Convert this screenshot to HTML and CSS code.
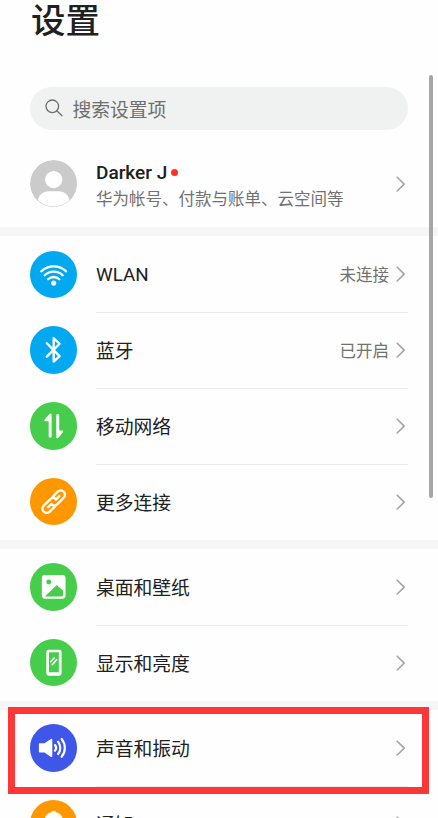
FILE: index.html
```html
<!DOCTYPE html>
<html lang="zh-CN">
<head>
<meta charset="utf-8">
<title>设置</title>
<link rel="stylesheet" href="styles.css">
</head>
<body>
<svg class="defs" width="0" height="0">
  <symbol id="chevron" viewBox="0 0 10 16"><path d="M1.200 1.200 8.200 8.100l-7 6.900" fill="none" stroke="#a4a4a4" stroke-width="1.600" stroke-linecap="round" stroke-linejoin="round"/></symbol>
</svg>
<main class="screen">
  <header class="header"><h1>设置</h1></header>
  <div class="search">
    <svg class="search-icon" viewBox="0 0 18 18"><circle cx="7.300" cy="7.300" r="6.300"/><path d="M12 12l5 4.800"/></svg>
    <span>搜索设置项</span>
  </div>
  <section class="profile">
    <svg class="icon" viewBox="0 0 48 48"><defs><clipPath id="face"><circle cx="24" cy="24" r="23"/></clipPath></defs><circle cx="24" cy="24" r="24" fill="#cbcbcb"/><g fill="#fff" clip-path="url(#face)"><circle cx="24" cy="19.800" r="8.700"/><path d="M7.500 43C8.500 35.500 13 31.700 19 31.700h10c6 0 10.500 3.800 11.500 11.300C35 49 13 49 7.500 43z"/></g></svg>
    <div class="who">
      <div class="name">Darker J<i class="dot"></i></div>
      <div class="sub">华为帐号、付款与账单、云空间等</div>
    </div>
    <svg class="chevron"><use href="#chevron"/></svg>
  </section>

  <div class="band"></div>
  <section class="group">
    <div class="row">
      <svg class="icon blue" viewBox="0 0 48 48"><g class="line" stroke-width="2.300"><path d="M11.400 20.600a18.500 18.500 0 0 1 25.200 0M14.900 24.600a13.200 13.200 0 0 1 18.200 0M18.300 28.600a8.300 8.300 0 0 1 11.400 0"/></g><circle cx="24" cy="32.500" r="2.600" fill="#fff"/></svg>
      <div class="body"><span class="label latin">WLAN</span><span class="value">未连接</span><svg class="chevron"><use href="#chevron"/></svg></div>
    </div>
    <div class="row">
      <svg class="icon blue" viewBox="0 0 48 48"><path class="line" stroke-width="2.400" d="M17 17.500 30 30.500l-6 5.500V12.400l6 5.600-13 13"/></svg>
      <div class="body"><span class="label">蓝牙</span><span class="value">已开启</span><svg class="chevron"><use href="#chevron"/></svg></div>
    </div>
    <div class="row">
      <svg class="icon green" viewBox="0 0 48 48"><path fill="#fff" d="M21.900 12.800v21.900a1.500 1.500 0 0 1-3 0V19.500h-3.600c-.9 0-1.100-.8-.6-1.400l4.700-5.700c.9-1 2.500-.8 2.500.4zM26.600 35.600V13.700a1.500 1.500 0 0 1 3 0v15.200h3.200c.9 0 1.100.8.600 1.400L29.100 36c-.9 1-2.500.8-2.500-.4z"/></svg>
      <div class="body"><span class="label">移动网络</span><svg class="chevron"><use href="#chevron"/></svg></div>
    </div>
    <div class="row">
      <svg class="icon orange" viewBox="0 0 48 48"><g class="line" stroke-width="2.400" transform="rotate(-45 24 24)"><path d="M21 28.300H14a4.300 4.300 0 0 1 0-8.600h9.500a4.300 4.300 0 0 1 4 3.300M27 19.700h7a4.300 4.300 0 0 1 0 8.600h-9.500a4.300 4.300 0 0 1-4-3.300M16 24h5M27 24h5"/></g></svg>
      <div class="body"><span class="label">更多连接</span><svg class="chevron"><use href="#chevron"/></svg></div>
    </div>
  </section>

  <div class="band"></div>
  <section class="group">
    <div class="row">
      <svg class="icon green" viewBox="0 0 48 48"><rect x="12" y="12.200" width="24" height="24" rx="3.200" fill="#fff"/><g fill="#46cd4b"><circle cx="19" cy="19.300" r="2.500"/><path d="M15 33.900 26.400 23c.5-.5 1-.5 1.500 0l5.600 5.200v4.200a1.500 1.500 0 0 1-1.500 1.500z"/></g></svg>
      <div class="body"><span class="label">桌面和壁纸</span><svg class="chevron"><use href="#chevron"/></svg></div>
    </div>
    <div class="row">
      <svg class="icon green" viewBox="0 0 48 48"><path fill="#fff" fill-rule="evenodd" d="M19 10.800h10.500a2.500 2.500 0 0 1 2.500 2.500v21.500a2.500 2.500 0 0 1-2.500 2.500H19a2.500 2.500 0 0 1-2.500-2.500V13.300a2.500 2.500 0 0 1 2.500-2.500zM19.200 13.400v20.300h10V13.400z"/><path class="line" stroke-width="1.600" d="m21 23 3.500-3.800M22.500 26l4.700-5.200"/></svg>
      <div class="body"><span class="label">显示和亮度</span><svg class="chevron"><use href="#chevron"/></svg></div>
    </div>
  </section>

  <div class="band"></div>
  <section class="group">
    <div class="row">
      <svg class="icon indigo" viewBox="0 0 48 48"><path fill="#fff" d="M9.800 19.600h4.900l6.400-4.500c.8-.5 1.500-.2 1.500.8v16.600c0 1-.7 1.300-1.500.8l-6.400-4.500H9.800a.8.800 0 0 1-.8-.8v-7.600c0-.5.300-.8.800-.8z"/><path class="line" stroke-width="2.200" d="M25.300 21.300a4.500 4.500 0 0 1 0 5.800M28.400 18a9.600 9.600 0 0 1 0 12.400M32 15.200a14 14 0 0 1 0 18"/></svg>
      <div class="body"><span class="label">声音和振动</span><svg class="chevron"><use href="#chevron"/></svg></div>
    </div>
    <div class="row">
      <svg class="icon orange" viewBox="0 0 48 48"><path fill="#fff" d="M21.500 12.500c1-2.300 4-2.300 5 0 4.500 1 7 4.500 7 9v6l2.500 4H12l2.500-4v-6c0-4.500 2.500-8 7-9z"/></svg>
      <div class="body"><span class="label">通知</span><svg class="chevron"><use href="#chevron"/></svg></div>
    </div>
  </section>
  <div class="scrollbar"></div>
  <div class="highlight"></div>
</main>
</body>
</html>
```
FILE: styles.css
```css
* { box-sizing: border-box; }
body {
  margin: 0;
  background: #fefefe;
  color: #202020;
  font-family: Roboto, "Noto Sans CJK SC", sans-serif;
}
.defs { position: absolute; }
.screen {
  position: relative;
  height: 818px;
  overflow: hidden;
}
.header {
  height: 87px;
  padding: 1px 0 0 31px;
}
h1 {
  margin: 0;
  font-size: 34.5px;
  font-weight: 500;
  line-height: 40px;
}
.search {
  display: flex;
  align-items: center;
  height: 42.5px;
  margin: 0 30px;
  padding-left: 15px;
  border-radius: 22px;
  background: #f0f2f1;
  color: #6d6e6e;
  font-size: 18.8px;
}
.search-icon {
  width: 18px;
  height: 18px;
  margin-right: 9.5px;
  fill: none;
  stroke: #6d6e6e;
  stroke-width: 1.3;
  stroke-linecap: round;
}
.profile {
  display: flex;
  align-items: center;
  height: 97.5px;
  padding: 11px 32px 0 30px;
}
.icon {
  flex: none;
  width: 47.4px;
  height: 47.4px;
  border-radius: 50%;
}
.who { flex: 1; margin-left: 18.6px; padding-top: 6px; }
.name {
  display: flex;
  align-items: center;
  font-size: 19px;
  font-weight: 500;
  line-height: 25px;
}
.dot {
  width: 7px;
  height: 7px;
  margin-left: 4px;
  border-radius: 50%;
  background: #fb3224;
}
.sub {
  color: #717171;
  font-size: 16.5px;
  line-height: 29px;
  white-space: nowrap;
}
.chevron { flex: none; width: 10px; height: 16px; }
.band { height: 9.4px; background: #f6f6f6; }
.row {
  display: flex;
  align-items: center;
  height: 75.8px;
  padding: 0 30px;
}
.body {
  flex: 1;
  display: flex;
  align-items: center;
  height: 77px;
  margin: 0 0 -1px 18.6px;
  padding-right: 2px;
  border-bottom: 1px solid #ebebeb;
}
.row:last-child .body { border-bottom-color: transparent; }
.label, .value { padding-top: 3px; line-height: 24px; }
.label { flex: 1; padding-top: 4px; font-size: 18.8px; }
.latin { padding-top: 1px; }
.value { margin-right: 7px; color: #717171; font-size: 16.5px; }
.blue { background: #03a9f0; }
.green { background: #46cd4b; }
.orange { background: #ff9800; }
.indigo { background: #3e57e9; }
.line {
  fill: none;
  stroke: #fff;
  stroke-linecap: round;
  stroke-linejoin: round;
}
.scrollbar {
  position: absolute;
  top: 75px;
  left: 428.5px;
  width: 4.5px;
  height: 423px;
  border-radius: 3px;
  background: #a6a6a6;
}
.highlight {
  position: absolute;
  top: 707px;
  left: 8px;
  width: 421px;
  height: 87px;
  border: 7px solid #fc3737;
}
```
